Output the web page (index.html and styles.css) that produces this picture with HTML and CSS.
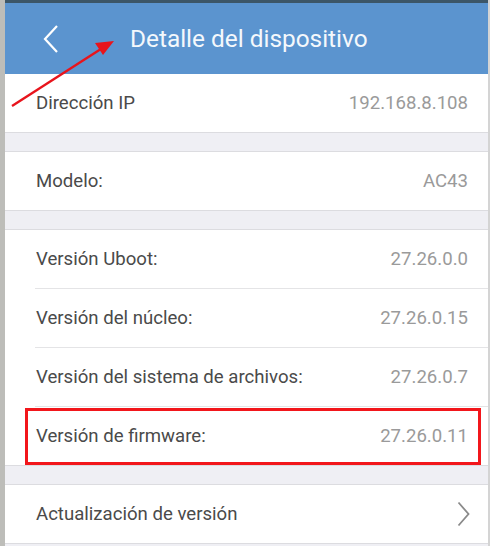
FILE: index.html
```html
<!DOCTYPE html>
<html lang="es">
<head>
    <meta charset="UTF-8">
    <meta name="viewport" content="width=device-width, initial-scale=1.0">
    <title>Detalle del dispositivo</title>
    <link rel="stylesheet" href="styles.css">
</head>
<body>
    <div class="screen">
        <div class="status"></div>
        <header class="topbar">
            <svg class="back" width="16" height="28" viewBox="0 0 16 28">
                <path d="M14 1 L2 14 L14 27" fill="none" stroke="#fff" stroke-width="2.2"/>
            </svg>
            <h1>Detalle del dispositivo</h1>
        </header>

        <div class="group">
            <div class="row"><span class="label">Dirección IP</span><span class="value">192.168.8.108</span></div>
        </div>

        <div class="group">
            <div class="row"><span class="label">Modelo:</span><span class="value">AC43</span></div>
        </div>

        <div class="group">
            <div class="row"><span class="label">Versión Uboot:</span><span class="value">27.26.0.0</span></div>
            <div class="row"><span class="label">Versión del núcleo:</span><span class="value">27.26.0.15</span></div>
            <div class="row"><span class="label">Versión del sistema de archivos:</span><span class="value">27.26.0.7</span></div>
            <div class="row"><span class="label">Versión de firmware:</span><span class="value">27.26.0.11</span></div>
        </div>

        <div class="group">
            <div class="row">
                <span class="label">Actualización de versión</span>
                <svg class="chevron" width="13" height="26" viewBox="0 0 13 26">
                    <path d="M1.5 1.5 L11.5 13 L1.5 24.5" fill="none" stroke="#8a8a8a" stroke-width="1.8"/>
                </svg>
            </div>
        </div>

        <!-- annotations -->
        <svg class="arrow" width="120" height="80" viewBox="0 0 120 80">
            <line x1="12" y1="66" x2="104" y2="7" stroke="#e8141c" stroke-width="2.4"/>
            <path d="M114 1 L95 3 L103 15 Z" fill="#e8141c"/>
        </svg>
        <div class="highlight"></div>
    </div>
</body>
</html>
```

FILE: styles.css
```css
html, body {
    margin: 0;
    padding: 0;
}
body {
    font-family: Roboto, "Noto Sans", sans-serif;
    background: #fff;
}
.screen {
    position: relative;
    width: 490px;
    height: 546px;
    box-sizing: border-box;
    border-left: 5px solid #bdbdb9;
    border-right: 2px solid #d4d4d4;
    background: #efeff4;
    overflow: hidden;
}
.status {
    height: 3px;
    background: #3c5668;
}
.topbar {
    height: 71px;
    background: #5b94cf;
    display: flex;
    align-items: center;
    padding-left: 38px;
}
.back {
    margin-right: 71px;
}
.topbar h1 {
    margin: 0;
    font-size: 24.4px;
    font-weight: normal;
    color: #f4f8fc;
}
.group {
    background: #fff;
    margin-bottom: 18px;
    border-bottom: 1px solid #dcdce0;
}
.group + .group {
    border-top: 1px solid #dcdce0;
}
.row {
    height: 58px;
    display: flex;
    align-items: center;
    justify-content: space-between;
    padding: 0 20px 0 31px;
    font-size: 18.6px;
}
.row + .row {
    border-top: 1px solid #e4e4e6;
    margin-left: 30px;
    padding-left: 1px;
}
.label {
    color: #4a4a4a;
}
.value {
    color: #9a9a9a;
}
.chevron {
    margin-right: -2px;
}
.arrow {
    position: absolute;
    left: -5px;
    top: 40px;
}
.highlight {
    position: absolute;
    left: 20px;
    top: 408px;
    width: 450px;
    height: 51px;
    border: 3px solid #f2161b;
}
```
